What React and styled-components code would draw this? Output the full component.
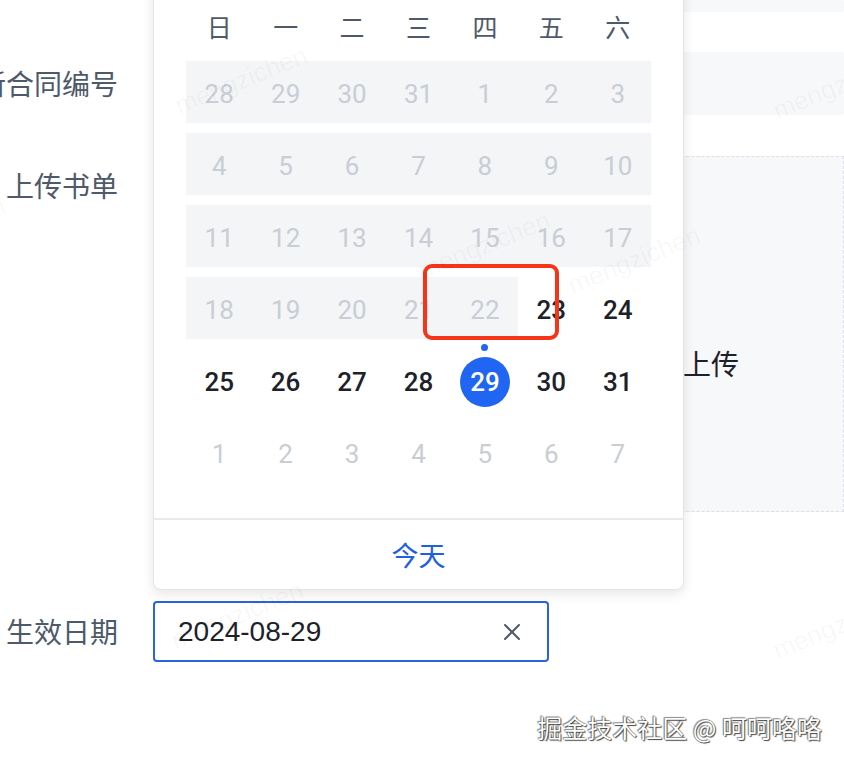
import React from "react";
import styled, { createGlobalStyle } from "styled-components";

const GlobalStyle = createGlobalStyle`
  html, body {
    margin: 0;
    padding: 0;
    background: #ffffff;
    overflow: hidden;
  }
  body {
    font-family: "Liberation Sans", "Noto Sans CJK SC", sans-serif;
  }
`;

const Page = styled.div`
  position: relative;
  width: 844px;
  height: 762px;
  overflow: hidden;
  background: #fff;
`;

const Form = styled.div`
  display: flex;
  flex-direction: column;
`;

const Row = styled.div`
  display: flex;
  align-items: ${(p) => (p.$top ? "flex-start" : "center")};
  gap: 35px;
  margin-top: ${(p) => p.$mt || 0}px;
`;

const LabelSpacer = styled.div`
  width: 118px;
  flex: none;
`;

const Label = styled.div`
  width: 118px;
  height: 60px;
  flex: none;
  box-sizing: border-box;
  padding-top: 4px;
  text-align: right;
  white-space: nowrap;
  direction: rtl;
  font-size: 28px;
  line-height: 56px;
  color: #4e5969;
`;

const Control = styled.div`
  position: relative;
  flex: ${(p) => (p.$w ? "none" : "1")};
  width: ${(p) => (p.$w ? `${p.$w}px` : "auto")};
`;

const GrayField = styled.div`
  height: ${(p) => p.$h}px;
  background: #f7f8fa;
  border-radius: 3px;
`;

const UploadBox = styled.div`
  height: 356px;
  box-sizing: border-box;
  border: 1px dashed #dcdfe5;
  background: #f7f8fa;
  display: flex;
  align-items: center;
  padding: 58px 0 0 473px;
  font-size: 28px;
  color: #1d2129;
  white-space: nowrap;
`;

const DateInput = styled.div`
  height: 61px;
  box-sizing: border-box;
  border: 2px solid #2a62e0;
  border-radius: 4px;
  display: flex;
  align-items: center;
  justify-content: space-between;
  padding: 0 26px 0 23px;
  font-size: 28px;
  color: #1d2129;
  background: #fff;
`;

const ClearIcon = styled.svg`
  width: 18px;
  height: 18px;
  display: block;
`;

/* calendar dropdown */
const Popup = styled.div`
  position: absolute;
  left: 0;
  bottom: calc(100% + 11px);
  width: 531px;
  box-sizing: border-box;
  background: #fff;
  border: 1px solid #e3e5ea;
  border-radius: 8px;
  box-shadow: 0 4px 12px rgba(0, 0, 0, 0.1);
  padding-top: 20px;
  z-index: 2;
`;

const CalBody = styled.div`
  padding: 0 32px 35px;
`;

const WeekHead = styled.div`
  display: grid;
  grid-template-columns: repeat(7, 1fr);
  height: 54px;
  margin-bottom: 8px;
  align-items: center;
  font-family: "Noto Sans CJK SC", sans-serif;
  font-size: 25px;
  color: #4e5969;
  text-align: center;
`;

const Weeks = styled.div`
  position: relative;
  display: flex;
  flex-direction: column;
  gap: 10px;
`;

const Week = styled.div`
  display: grid;
  grid-template-columns: repeat(7, 1fr);
  height: 62px;
`;

const Cell = styled.div`
  position: relative;
  display: flex;
  align-items: center;
  justify-content: center;
  padding-top: 4px;
  font-family: Roboto, "Liberation Sans", sans-serif;
  font-size: 26px;
  font-weight: ${(p) => (p.$muted ? 400 : 500)};
  color: ${(p) => (p.$muted ? "#c9cdd4" : "#1d2129")};
  background: ${(p) => (p.$disabled ? "#f4f5f7" : "transparent")};
`;

const Selected = styled.span`
  width: 50px;
  height: 50px;
  border-radius: 50%;
  background: #2166f2;
  color: #fff;
  display: flex;
  align-items: center;
  justify-content: center;
`;

const TodayDot = styled.span`
  position: absolute;
  top: -5px;
  left: 50%;
  width: 7px;
  height: 7px;
  margin-left: -3.5px;
  border-radius: 50%;
  background: #2166f2;
`;

const Footer = styled.div`
  border-top: 2px solid #e8e9ec;
  height: 69px;
  display: flex;
  align-items: center;
  justify-content: center;
  font-family: "Noto Sans CJK SC", sans-serif;
  font-size: 27px;
  color: #2060e0;
`;

const Marker = styled.div`
  position: absolute;
  left: 237px;
  top: 203px;
  width: 136px;
  height: 76px;
  box-sizing: border-box;
  border: 4px solid #f5341a;
  border-radius: 9px;
  pointer-events: none;
`;

const Credit = styled.div`
  display: flex;
  justify-content: flex-end;
  padding: 49px 22px 0 0;
  font-family: "Noto Sans CJK SC", sans-serif;
  font-size: 25px;
  line-height: 32px;
  color: #ffffff;
  text-shadow: 0 0 1px #222, 1px 1px 1px rgba(0, 0, 0, 0.7),
    -1px -1px 1px rgba(0, 0, 0, 0.4);
`;

const MarkLayer = styled.div`
  position: absolute;
  inset: 0;
  pointer-events: none;
  z-index: 3;
`;

const Mark = styled.span`
  position: absolute;
  font-size: 26px;
  color: rgba(0, 0, 0, 0.035);
  transform: rotate(-22deg);
  transform-origin: left bottom;
  white-space: nowrap;
`;

const weekdays = ["日", "一", "二", "三", "四", "五", "六"];

const weeks = [
  [28, 29, 30, 31, 1, 2, 3],
  [4, 5, 6, 7, 8, 9, 10],
  [11, 12, 13, 14, 15, 16, 17],
  [18, 19, 20, 21, 22, 23, 24],
  [25, 26, 27, 28, 29, 30, 31],
  [1, 2, 3, 4, 5, 6, 7],
];

function dayState(w, i) {
  if (w < 3) return { muted: true, disabled: true };
  if (w === 3) return i < 5 ? { muted: true, disabled: true } : {};
  if (w === 5) return { muted: true };
  return {};
}

const marks = [
  [182, 120],
  [425, 285],
  [575, 300],
  [-120, 270],
  [780, 125],
  [178, 655],
  [780, 665],
];

export default function App() {
  return (
    <Page>
      <GlobalStyle />
      <Form>
        <Row>
          <LabelSpacer />
          <Control>
            <GrayField $h={12} />
          </Control>
        </Row>
        <Row $mt={40}>
          <Label>新合同编号</Label>
          <Control>
            <GrayField $h={63} />
          </Control>
        </Row>
        <Row $mt={41} $top>
          <Label>上传书单</Label>
          <Control>
            <UploadBox>点击上传</UploadBox>
          </Control>
        </Row>
        <Row $mt={89}>
          <Label>生效日期</Label>
          <Control $w={396}>
            <Popup>
              <CalBody>
                <WeekHead>
                  {weekdays.map((d) => (
                    <span key={d}>{d}</span>
                  ))}
                </WeekHead>
                <Weeks>
                  {weeks.map((week, w) => (
                    <Week key={w}>
                      {week.map((d, i) => {
                        const s = dayState(w, i);
                        const isSel = w === 4 && d === 29;
                        return (
                          <Cell key={i} $muted={s.muted} $disabled={s.disabled}>
                            {isSel ? (
                              <>
                                <TodayDot />
                                <Selected>{d}</Selected>
                              </>
                            ) : (
                              d
                            )}
                          </Cell>
                        );
                      })}
                    </Week>
                  ))}
                  <Marker />
                </Weeks>
              </CalBody>
              <Footer>今天</Footer>
            </Popup>
            <DateInput>
              <span>2024-08-29</span>
              <ClearIcon viewBox="0 0 18 18" fill="none">
                <path
                  d="M2 2L16 16M16 2L2 16"
                  stroke="#4e5969"
                  strokeWidth="2"
                  strokeLinecap="round"
                />
              </ClearIcon>
            </DateInput>
          </Control>
        </Row>
      </Form>
      <Credit>掘金技术社区 @ 呵呵咯咯</Credit>
      <MarkLayer>
        {marks.map(([x, y], i) => (
          <Mark key={i} style={{ left: x, top: y - 30 }}>
            mengzichen
          </Mark>
        ))}
      </MarkLayer>
    </Page>
  );
}
